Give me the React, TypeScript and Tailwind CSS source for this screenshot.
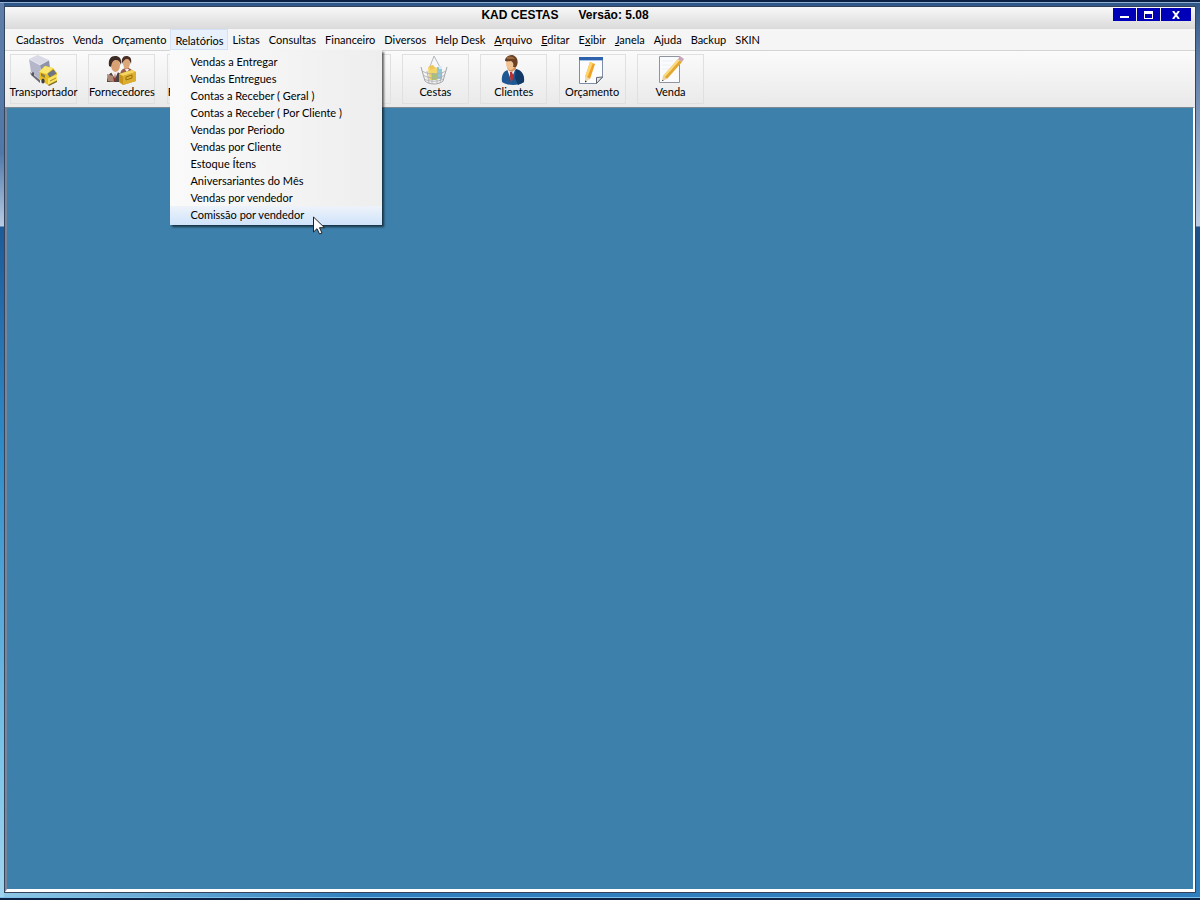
import { ReactNode } from 'react';

type MenuEntry = { label: string; mark?: number };

const menus: MenuEntry[] = [
  { label: 'Cadastros' },
  { label: 'Venda' },
  { label: 'Orçamento' },
  { label: 'Relatórios' },
  { label: 'Listas' },
  { label: 'Consultas' },
  { label: 'Financeiro' },
  { label: 'Diversos' },
  { label: 'Help Desk' },
  { label: 'Arquivo', mark: 0 },
  { label: 'Editar', mark: 0 },
  { label: 'Exibir', mark: 1 },
  { label: 'Janela', mark: 0 },
  { label: 'Ajuda' },
  { label: 'Backup' },
  { label: 'SKIN' },
];

const reports = [
  'Vendas a Entregar',
  'Vendas Entregues',
  'Contas a Receber ( Geral )',
  'Contas a Receber ( Por Cliente )',
  'Vendas por Periodo',
  'Vendas por Cliente',
  'Estoque Ítens',
  'Aniversariantes do Mês',
  'Vendas por vendedor',
  'Comissão por vendedor',
];

function Icon({ children }: { children?: ReactNode }) {
  return (
    <svg viewBox="0 0 32 32" className="size-8 shrink-0" aria-hidden="true">
      {children}
    </svg>
  );
}

const truck = (
  <Icon>
    <path d="M2 17l10 8v3L3 20z" fill="#6a6b74" />
    <path d="M1 4 9.500 0 21 5l-9 5z" fill="#d9dae6" />
    <path d="M1 4l11 6v15l-9-8z" fill="#b4b7c9" />
    <path d="M12 10l9-5 1 8-9 6z" fill="#8f93a8" />
    <path d="M1 4l11 6 9-5" fill="none" stroke="#eceef5" strokeWidth="0.7" />
    <path d="M11 17l6-6 8 2 4 5v8l-9 4-9-6z" fill="#eabf24" />
    <path d="M11 17l6-6 8 2-6 6z" fill="#fbe670" />
    <path d="M19.500 18.500l6-4 3 4-7 4z" fill="#6d7684" />
    <path d="M13 18l4 2v3l-4-2z" fill="#8d8248" />
    <path d="M20 23.500l9-4v6l-9 4z" fill="#f9e365" />
    <path d="M22 26l6-3" stroke="#a98b22" />
    <ellipse cx="15" cy="26" rx="1.700" ry="2.500" fill="#3e3e43" />
    <ellipse cx="5" cy="19" rx="1" ry="2" fill="#4f4f56" />
    <path d="M20 30l9-4.500V27l-8 4z" fill="#7d6b28" />
  </Icon>
);

const suppliers = (
  <Icon>
    <path d="M1 27c0-7 3-10 8-10s8 3 8 10z" fill="#4d4240" />
    <path d="M5 17l4 7 3-7z" fill="#f5f0ee" />
    <path d="M9 18l1 7-1 2-1-2z" fill="#9b2d2d" />
    <ellipse cx="9.500" cy="10" rx="4.500" ry="7" fill="#d9a074" />
    <path d="M3 11C2 4 5 1 9 1s7 2 6 9c-1-3-2-5-5-5S6 7 5 12z" fill="#3c2c25" />
    <path d="M14 21c0-6 3-8 7-8s6 2 6 8z" fill="#9a5c4a" />
    <ellipse cx="20.500" cy="8" rx="3.500" ry="6" fill="#dca678" />
    <path d="M16 9c-1-5 1-8 4-8 4 0 6 2 5 8-1-3-2-5-4-5s-4 2-5 5z" fill="#4a2f26" />
    <path d="M19 14l2 4 2-4z" fill="#f5f0ee" />
    <path d="M13 19l13-4 4 2v9l-13 4-4-3z" fill="#c9941a" />
    <path d="M13 19l13-4 4 2-13 4z" fill="#f2d660" />
    <path d="M17 21l13-4v9l-13 4z" fill="#dcae30" />
    <path d="M20 22l6-2v3l-6 2z" fill="none" stroke="#98700f" />
    <path d="M1 19l6 2 1 6-6-1z" fill="#a98774" />
  </Icon>
);

const basket = (
  <Icon>
    <path d="M10 14 15 1l7 13" fill="none" stroke="#b4b8bc" />
    <path d="M9 12l5-1 4 2v12h-8z" fill="#f3d568" />
    <path d="M10 11l4-1 2 3-4 2z" fill="#f0c45a" />
    <path d="M18 12h5v12h-5z" fill="#8fc6da" />
    <path d="M13 18l6 1-2 6h-4z" fill="#a9c564" />
    <path d="M20 11h3v3h-3z" fill="#dcebf1" />
    <path d="M2 12l4 14c4 4 14 4 18 0l4-14" fill="none" stroke="#a2a6a9" />
    <path d="M3 16c7 4 17 4 24 0M4 20c6 4 16 4 22 0M5 24c6 3 14 3 19 0M8 16l2 12M13 18v11M18 18v11M23 17l-2 11" fill="none" stroke="#a9acb0" strokeWidth="0.8" />
  </Icon>
);

const client = (
  <Icon>
    <path d="M4 27c-1-8 2-12 9-13 9 0 13 4 13 13-5 4-17 4-22 0z" fill="#1f5794" />
    <path d="M18 14c5 1 9 5 8 13l-6 3-3-7z" fill="#123a68" />
    <path d="M9 14l4 11 4-10-3-3z" fill="#f4f4f8" />
    <path d="M12 17h2l2 5-3 6-1-6z" fill="#b63131" />
    <path d="M9 13l2 3 3 1 4-3v-4h-8z" fill="#d6955f" />
    <ellipse cx="12.500" cy="8.500" rx="4.500" ry="6.500" fill="#f1c294" />
    <path d="M7 6c0-4 4-6 7-6 6 1 7 8 4 12h-3c1-3 0-5-2-6-2 0-4 1-6 0z" fill="#6b4125" />
    <path d="M9 2c3-1 6-1 8 2-3 0-6 0-8 0z" fill="#9c6a40" />
  </Icon>
);

const budget = (
  <Icon>
    <path d="M3.500 2.500h23v20l-6 6h-17z" fill="#fdfdfe" stroke="#7f8ea8" />
    <path d="M3 2h24v3H3z" fill="#2f62ad" />
    <path d="M4 5h22v1H4z" fill="#a9c4e8" />
    <path d="M26.500 22l-6 .5v6z" fill="#e3e7ec" stroke="#5f6670" />
    <path d="M14 7l5 2-5 15-5-2z" fill="#f0a127" />
    <path d="M14 7l3 1-6 15-2-1z" fill="#ffd56d" />
    <path d="M9 21l5 3-5 3z" fill="#f4d8ae" />
    <path d="M9 25.500l2 1-2 1z" fill="#333" />
  </Icon>
);

const sale = (
  <Icon>
    <path d="M4.500 1.500h20v26h-20z" fill="#fafbfe" stroke="#8f949e" />
    <path d="M7 6h11M7 10h9M7 14h7" stroke="#eceff4" />
    <path d="M23 4l4 3-15 17-4-3z" fill="#e3a832" />
    <path d="M23 4l2 1-15 17-2-1z" fill="#fbdb85" />
    <path d="M8 21l4 3-5 2z" fill="#edcfa2" />
    <path d="M7 25h2l-2 1z" fill="#333" />
    <path d="M23 4l2-3 4 3-2 3z" fill="#c9a5b8" />
  </Icon>
);

const tools: { id: string; label: string; icon?: ReactNode }[] = [
  { id: 'transportador', label: 'Transportador', icon: truck },
  { id: 'fornecedores', label: 'Fornecedores', icon: suppliers },
  { id: 'f', label: 'F' },
  { id: 'tool-4', label: '' },
  { id: 'tool-5', label: '' },
  { id: 'cestas', label: 'Cestas', icon: basket },
  { id: 'clientes', label: 'Clientes', icon: client },
  { id: 'orcamento', label: 'Orçamento', icon: budget },
  { id: 'venda', label: 'Venda', icon: sale },
];

function MenuLabel({ label, mark }: MenuEntry) {
  if (mark === undefined) return <>{label}</>;
  return (
    <span>
      {label.slice(0, mark)}
      <u>{label[mark]}</u>
      {label.slice(mark + 1)}
    </span>
  );
}

function ReportsMenu() {
  return (
    <div
      role="menu"
      className="absolute top-full left-0 z-10 flex w-[212px] flex-col bg-linear-to-r from-[#fafafa] to-[#eeeeee] pt-[3px] shadow-[2px_2px_2px_rgba(0,0,0,0.6)]"
    >
      {reports.map((r, i) => (
        <button
          key={r}
          role="menuitem"
          className={
            i === reports.length - 1
              ? 'h-[19px] bg-linear-to-b from-[#eef3fa] to-[#cfe3fa] pb-0.5 pl-5 text-left leading-[17px]'
              : 'h-[17px] pl-5 text-left leading-[17px]'
          }
        >
          {r}
        </button>
      ))}
      <svg viewBox="0 0 12 19" className="absolute -bottom-[10px] left-[143px] h-[19px] w-3" aria-hidden="true">
        <path d="M.5 1v15l3.500-3.300L6.500 18l2.500-1-2.500-5.300h5z" fill="#fff" stroke="#222" />
      </svg>
    </div>
  );
}

export default function App() {
  return (
    <div className="flex min-h-screen flex-col border-t-2 border-b-2 border-[#0b2145] bg-[#2f5688] font-[Lato,'Liberation_Sans',sans-serif] text-[11px] text-black">
      <div className="flex flex-1 flex-col border-t border-b border-t-[#8fb0d4] border-b-[#7fc0e8] px-1 pt-[3px] pb-1 [background:linear-gradient(to_bottom,#5f7da8_0,#4f78a8_150px,#b9cbe4_223px,#1d5a98_224px,#2f8cc8_450px,#7cc4e8_750px,#a0d4ee_100%)_left/4px_100%_no-repeat,linear-gradient(to_right,#8fc8e6,#2f7fbe_30%)_bottom/100%_4px_no-repeat,linear-gradient(to_bottom,#2f5688_0,#5f7da8_60px,#b9cbe4_223px,#1d5088_224px,#2f7fbe_100%)]">
        <div className="flex flex-1 flex-col border border-[#33445c] bg-white">
          <header className="flex h-[22px] items-start bg-linear-to-b from-[#f8f8f8] to-[#dadada]">
            <h1 className="flex flex-1 justify-center gap-5 pl-3 font-['Liberation_Sans',sans-serif] text-[12px] leading-4 font-bold">
              <span>KAD CESTAS</span>
              <span>Versão: 5.08</span>
            </h1>
            <div className="flex gap-px pt-px pr-1">
              <button aria-label="Minimizar" className="flex h-[13px] w-[23px] items-end justify-center bg-[#0000b8] pb-[3px]">
                <span className="h-0.5 w-[9px] bg-white" />
              </button>
              <button aria-label="Maximizar" className="flex h-[13px] w-[23px] items-center justify-center bg-[#0000b8]">
                <span className="h-2 w-[9px] border border-t-[3px] border-white" />
              </button>
              <button aria-label="Fechar" className="flex h-[13px] w-[30px] items-center justify-center bg-[#0000b8]">
                <svg viewBox="0 0 8 8" className="size-2" aria-hidden="true">
                  <path d="M1 0l6 8M7 0L1 8" stroke="#fff" strokeWidth="2" />
                </svg>
              </button>
            </div>
          </header>
          <nav className="flex h-[22px] border-b border-[#d4d4d4] bg-[#f5f5f5] pl-[6px]">
            {menus.map((m) =>
              m.label === 'Relatórios' ? (
                <div key={m.label} className="relative">
                  <button className="h-[21px] border border-[#d3e3f5] bg-[#e8f1fb] pt-0.5 pr-[3px] pl-1 leading-4">{m.label}</button>
                  <ReportsMenu />
                </div>
              ) : (
                <button key={m.label} className="pr-1 pl-[5px] leading-4">
                  <MenuLabel label={m.label} mark={m.mark} />
                </button>
              ),
            )}
          </nav>
          <div className="bg-linear-to-b from-[#fbfbfb] to-[#e9e9e9] py-[3px] pl-[5px]">
            <div className="flex w-[694px] justify-between">
              {tools.map((t) => (
                <button
                  key={t.id}
                  className={
                    t.icon
                      ? 'flex h-[50px] w-[67px] flex-col items-center border border-[#e0e0e0] leading-[10px] whitespace-nowrap'
                      : 'flex h-[50px] w-[67px] flex-col items-start border border-[#e0e0e0] leading-[10px]'
                  }
                >
                  {t.icon ?? <Icon />}
                  {t.label}
                </button>
              ))}
            </div>
          </div>
          <main className="flex-1 border-t border-r-2 border-b-[3px] border-l-2 border-t-[#7d8a94] border-r-white border-b-white border-l-[#76859a] bg-[#3c80ab]" />
        </div>
      </div>
    </div>
  );
}
